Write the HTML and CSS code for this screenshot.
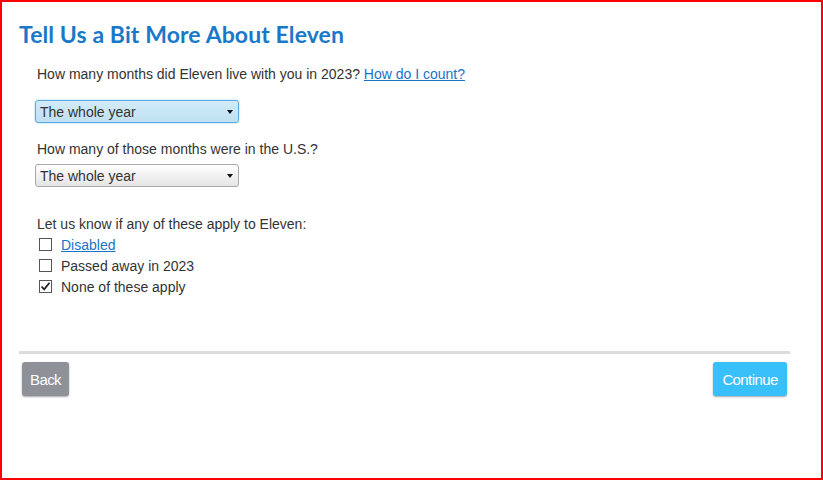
FILE: index.html
```html
<!DOCTYPE html>
<html>
<head>
<meta charset="utf-8">
<link rel="stylesheet" href="styles.css">
</head>
<body>
<div class="frame">
  <h1 class="title">Tell Us a Bit More About Eleven</h1>
  <div class="content">
    <p class="q q1">How many months did Eleven live with you in 2023? <a href="#" class="link">How do I count?</a></p>
    <div class="select focused"><span>The whole year</span><span class="caret"></span></div>
    <p class="q q2">How many of those months were in the U.S.?</p>
    <div class="select"><span>The whole year</span><span class="caret"></span></div>
    <p class="q q3">Let us know if any of these apply to Eleven:</p>
    <ul class="checks">
      <li><span class="box"></span><a href="#" class="link">Disabled</a></li>
      <li><span class="box"></span><span>Passed away in 2023</span></li>
      <li><span class="box checked"><svg width="11" height="11" viewBox="0 0 11 11"><path d="M1.5 5.5 L4.2 8.3 L9.5 1.8" fill="none" stroke="#222" stroke-width="1.8"/></svg></span><span>None of these apply</span></li>
    </ul>
  </div>
  <div class="rule"></div>
  <div class="actions">
    <button class="btn back">Back</button>
    <button class="btn continue">Continue</button>
  </div>
</div>
</body>
</html>
```
FILE: styles.css
```css
html, body {
  margin: 0;
  padding: 0;
}
body {
  width: 823px;
  height: 480px;
  background: #fff;
  font-family: "Liberation Sans", Arial, sans-serif;
  color: #333;
}
.frame {
  box-sizing: border-box;
  width: 823px;
  height: 480px;
  border: 2px solid #ff0000;
  padding: 18px 31px 0 17px;
}
.title {
  margin: 0;
  font-family: Lato, "Open Sans", sans-serif;
  font-weight: 700;
  font-size: 23px;
  line-height: 28px;
  color: #1978c8;
  letter-spacing: 0.1px;
}
.content {
  padding-left: 16px;
}
.q {
  margin: 0;
  font-size: 14px;
  line-height: 18px;
}
.q1 { margin-top: 17px; margin-left: 2px; }
.q2 { margin-top: 17px; margin-left: 2px; }
.q3 { margin-top: 28px; margin-left: 2px; }
.link {
  color: #1a73c7;
  text-decoration: underline;
}
.select {
  box-sizing: border-box;
  width: 204px;
  height: 23px;
  display: flex;
  align-items: center;
  justify-content: space-between;
  padding: 0 5px 0 4px;
  border: 1px solid #a9a9a9;
  border-radius: 3px;
  background: linear-gradient(#ffffff, #e4e4e4);
  font-size: 14px;
  color: #333;
}
.select.focused {
  margin-top: 17px;
  border-color: #5aa9e6;
  box-shadow: 0 0 2px #8cc8f2;
  background: linear-gradient(#d2ebf8, #bfe1f2);
}
.q2 + .select {
  margin-top: 6px;
}
.caret {
  width: 0;
  height: 0;
  border-left: 3.5px solid transparent;
  border-right: 3.5px solid transparent;
  border-top: 4px solid #111;
}
.checks {
  list-style: none;
  margin: 1px 0 0 0;
  padding: 0;
}
.checks li {
  display: flex;
  align-items: center;
  height: 21px;
  font-size: 14px;
}
.box {
  box-sizing: border-box;
  width: 13px;
  height: 13px;
  border: 1px solid #555;
  margin-left: 4px;
  margin-right: 9px;
  display: flex;
  align-items: center;
  justify-content: center;
  background: #fff;
}
.rule {
  margin-top: 54px;
  height: 3px;
  background: #dcdcdc;
}
.actions {
  display: flex;
  justify-content: space-between;
  padding: 8px 3px 0 3px;
}
.btn {
  height: 34px;
  border: none;
  border-radius: 3px;
  color: #fff;
  font-family: "Liberation Sans", Arial, sans-serif;
  font-size: 15px;
  letter-spacing: -0.6px;
  box-shadow: 0 1px 2px rgba(0,0,0,0.35);
  padding: 0;
}
.back {
  width: 47px;
  background: #8e9198;
}
.continue {
  width: 74px;
  background: #38c0fa;
}
```
